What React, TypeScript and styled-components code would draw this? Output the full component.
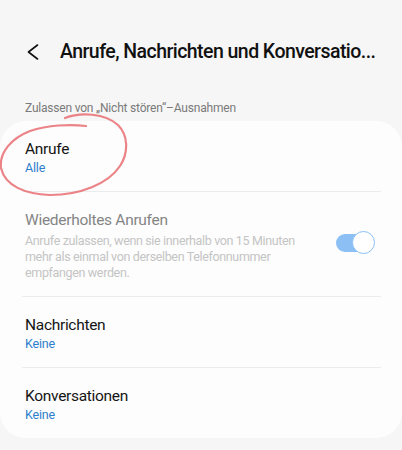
import React from "react";
import styled, { createGlobalStyle } from "styled-components";

const GlobalStyle = createGlobalStyle`
  html, body {
    margin: 0;
    padding: 0;
    background: #f6f6f6;
  }
  body {
    font-family: Roboto, "Noto Sans", sans-serif;
    -webkit-font-smoothing: antialiased;
  }
`;

const Page = styled.div`
  position: relative;
  width: 402px;
  height: 450px;
  overflow: hidden;
  background: #f6f6f6;
`;

const Header = styled.header`
  display: flex;
  align-items: center;
  height: 28px;
  padding: 38px 0 0 27px;
`;

const BackButton = styled.button`
  display: flex;
  align-items: center;
  justify-content: center;
  width: 12px;
  height: 28px;
  padding: 0;
  border: none;
  background: none;
  margin-right: 21px;
`;

const Title = styled.h1`
  margin: 0;
  font-size: 19.5px;
  line-height: 28px;
  font-weight: 500;
  letter-spacing: -0.55px;
  color: #111;
  white-space: nowrap;
`;

const SectionLabel = styled.p`
  margin: 34px 0 5px 25px;
  font-size: 12px;
  line-height: 16px;
  color: #7a7a7a;
  letter-spacing: -0.2px;
`;

const Card = styled.section`
  background: #fdfdfd;
  border-radius: 26px;
  padding: 0 21px 0 22px;
`;

const Row = styled.div<{ $last?: boolean }>`
  display: flex;
  align-items: center;
  padding: 17px 3px 15px;
  border-bottom: ${({ $last }) => ($last ? "none" : "1px solid #ececec")};
`;

const RowText = styled.div`
  flex: 1;
`;

const RowTitle = styled.div<{ $disabled?: boolean }>`
  font-size: 15.5px;
  line-height: 22px;
  letter-spacing: -0.3px;
  color: ${({ $disabled }) => ($disabled ? "#858585" : "#151515")};
`;

const RowValue = styled.div`
  font-size: 12.5px;
  line-height: 16px;
  letter-spacing: -0.2px;
  color: #2d7ecb;
`;

const RowDescription = styled.div`
  margin-top: 2px;
  max-width: 295px;
  font-size: 12.5px;
  line-height: 16px;
  letter-spacing: -0.35px;
  color: #c4c4c4;
`;

const Toggle = styled.div<{ $on?: boolean }>`
  position: relative;
  flex-shrink: 0;
  width: 38px;
  height: 18px;
  margin: 0 4px 4px 0;
  border-radius: 9px;
  background: #8cc0f5;
`;

const Thumb = styled.div`
  position: absolute;
  top: -3px;
  right: -1px;
  width: 21px;
  height: 21px;
  border-radius: 50%;
  background: #fff;
  border: 1.5px solid #8cc0f5;
`;

const Scribble = styled.svg`
  position: absolute;
  left: 0;
  top: 0;
  pointer-events: none;
`;

const rows = [
  { title: "Nachrichten", value: "Keine" },
  { title: "Konversationen", value: "Keine" },
];

export default function App() {
  return (
    <Page>
      <GlobalStyle />
      <Header>
        <BackButton aria-label="Zurück">
          <svg width="12" height="16" viewBox="0 0 12 16">
            <path
              d="M10.5 1 L1.5 8 L10.5 15"
              fill="none"
              stroke="#111"
              strokeWidth="1.6"
              strokeLinecap="round"
              strokeLinejoin="round"
            />
          </svg>
        </BackButton>
        <Title>Anrufe, Nachrichten und Konversatio...</Title>
      </Header>
      <SectionLabel>Zulassen von „Nicht stören“–Ausnahmen</SectionLabel>
      <Card>
        <Row>
          <RowText>
            <RowTitle>Anrufe</RowTitle>
            <RowValue>Alle</RowValue>
          </RowText>
        </Row>
        <Row>
          <RowText>
            <RowTitle $disabled>Wiederholtes Anrufen</RowTitle>
            <RowDescription>
              Anrufe zulassen, wenn sie innerhalb von 15 Minuten mehr als
              einmal von derselben Telefonnummer empfangen werden.
            </RowDescription>
          </RowText>
          <Toggle $on>
            <Thumb />
          </Toggle>
        </Row>
        {rows.map((row, i) => (
          <Row key={row.title} $last={i === rows.length - 1}>
            <RowText>
              <RowTitle>{row.title}</RowTitle>
              <RowValue>{row.value}</RowValue>
            </RowText>
          </Row>
        ))}
      </Card>
      <Scribble width="402" height="450" viewBox="0 0 402 450">
        <path
          d="M65 118 C 80 112, 105 113, 118 125 C 128 135, 129 152, 120 166 C 108 184, 80 195, 50 195 C 25 194, 5 186, 1 168 C -1 152, 12 138, 30 131 C 48 125, 70 124, 86 126"
          fill="none"
          stroke="#e9767a"
          strokeWidth="2.2"
          strokeLinecap="round"
          opacity="0.9"
        />
      </Scribble>
    </Page>
  );
}
